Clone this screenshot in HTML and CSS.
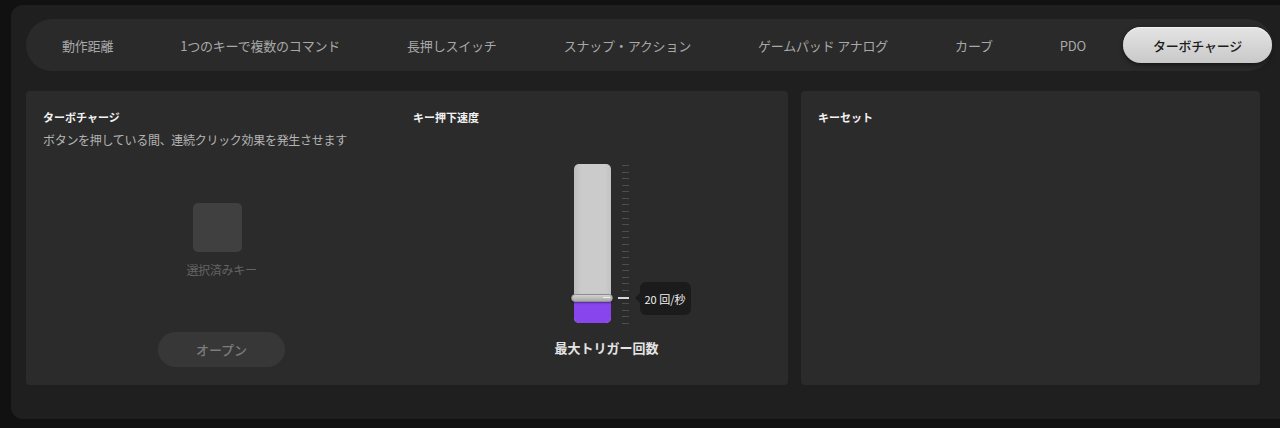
FILE: index.html
```html
<!DOCTYPE html>
<html lang="ja">
<head>
    <meta charset="UTF-8">
    <meta name="viewport" content="width=device-width, initial-scale=1.0">
    <title>ターボチャージ</title>
    <link rel="stylesheet" href="styles.css">
</head>
<body>
    <div class="frame">
        <nav class="tabs">
            <button class="tab">動作距離</button>
            <button class="tab">1つのキーで複数のコマンド</button>
            <button class="tab">長押しスイッチ</button>
            <button class="tab">スナップ・アクション</button>
            <button class="tab">ゲームパッド アナログ</button>
            <button class="tab">カーブ</button>
            <button class="tab">PDO</button>
            <button class="tab active">ターボチャージ</button>
        </nav>

        <div class="cards">
            <section class="card turbo">
                <div class="col">
                    <h4>ターボチャージ</h4>
                    <p class="desc">ボタンを押している間、連続クリック効果を発生させます</p>
                    <div class="key-area">
                        <div class="key-slot"></div>
                        <span class="key-label">選択済みキー</span>
                        <button class="open-btn">オープン</button>
                    </div>
                </div>
                <div class="col">
                    <h4>キー押下速度</h4>
                    <div class="speed">
                        <div class="track">
                            <div class="fill"></div>
                            <div class="handle"></div>
                            <div class="ticks" id="ticks"></div>
                            <div class="tick-now"></div>
                            <div class="tip">20 回/秒</div>
                        </div>
                        <div class="speed-label">最大トリガー回数</div>
                    </div>
                </div>
            </section>

            <section class="card">
                <h4>キーセット</h4>
            </section>
        </div>
    </div>

    <script>
        const ticks = document.getElementById('ticks');
        for (let i = 0; i < 25; i++) {
            ticks.appendChild(document.createElement('span'));
        }
    </script>
</body>
</html>
```

FILE: styles.css
```css
body {
    margin: 0;
    background-color: #111111;
    font-family: 'Noto Sans CJK JP', 'Noto Sans', sans-serif;
    overflow: hidden;
    height: 428px;
}

h4 {
    margin: 0;
    font-size: 11px;
    line-height: 16px;
    font-weight: 700;
    color: #f2f2f2;
}

button {
    font-family: inherit;
    border: none;
    cursor: pointer;
}

.frame {
    margin: 5px 0 0 11px;
    width: 1290px;
    height: 414px;
    box-sizing: border-box;
    padding: 14px 15px 0 15px;
    background-color: #1f1f1f;
    border-radius: 12px;
}

.tabs {
    width: 1247px;
    height: 52px;
    box-sizing: border-box;
    padding: 8px 4px 8px 6px;
    display: flex;
    gap: 7px;
    background-color: #2a2a2a;
    border-radius: 26px;
}

.tab {
    height: 36px;
    padding: 0 30px;
    background: none;
    color: #a8a8a8;
    font-size: 13px;
    letter-spacing: -0.2px;
    border-radius: 18px;
    white-space: nowrap;
}

.tab.active {
    background: linear-gradient(#e4e4e4, #c9c9c9);
    color: #1c1c1c;
    font-weight: 500;
    box-shadow: inset 0 1px 1px rgba(255, 255, 255, 0.6), 0 2px 5px rgba(0, 0, 0, 0.5);
}

.cards {
    margin-top: 20px;
    display: grid;
    grid-template-columns: 762px 459px;
    gap: 13px;
}

.card {
    height: 294px;
    box-sizing: border-box;
    padding: 18px 17px;
    background-color: #2b2b2b;
    border-radius: 4px;
}

.turbo {
    display: grid;
    grid-template-columns: 357px 358px;
    gap: 13px;
    padding-bottom: 0;
}

.desc {
    margin: 6px 0 0;
    font-size: 12px;
    line-height: 18px;
    letter-spacing: -0.3px;
    color: #b4b4b4;
}

.key-area {
    display: flex;
    flex-direction: column;
    align-items: center;
}

.key-slot {
    margin-top: 54px;
    margin-right: 8px;
    width: 49px;
    height: 49px;
    background-color: #404040;
    border-radius: 5px;
}

.key-label {
    margin-top: 9px;
    font-size: 12px;
    line-height: 18px;
    letter-spacing: -0.3px;
    color: #646464;
}

.open-btn {
    margin-top: 53px;
    width: 127px;
    height: 35px;
    background-color: #373737;
    color: #7c7c7c;
    font-size: 13px;
    font-weight: 500;
    border-radius: 18px;
}

.speed {
    display: flex;
    flex-direction: column;
    align-items: center;
}

.track {
    position: relative;
    margin-top: 39px;
    width: 37px;
    height: 159px;
    background: linear-gradient(90deg, #bdbdbd, #cbcbcb 20%, #cbcbcb 85%, #c2c2c2);
    border-radius: 5px;
}

.fill {
    position: absolute;
    left: 0;
    right: 0;
    bottom: 0;
    height: 24px;
    background-color: #8845ee;
    border-radius: 0 0 5px 5px;
}

.handle {
    position: absolute;
    left: -3px;
    top: 130px;
    width: 42px;
    height: 8px;
    box-sizing: border-box;
    background: linear-gradient(#d2d2d2, #a9a9a9);
    border: 1px solid #8e8e8e;
    border-radius: 4px;
    box-shadow: 0 1px 2px rgba(0, 0, 0, 0.4);
}

.handle::after {
    content: '';
    position: absolute;
    right: 2px;
    top: 2px;
    width: 7px;
    height: 1px;
    background-color: #f0f0f0;
}

.ticks {
    position: absolute;
    left: 48px;
    top: 1px;
    width: 7px;
    height: 159px;
    display: flex;
    flex-direction: column;
    justify-content: space-between;
}

.ticks span {
    height: 1px;
    background-color: #4d4d4d;
}

.tick-now {
    position: absolute;
    left: 44px;
    top: 133px;
    width: 11px;
    height: 2px;
    background-color: #d8d8d8;
}

.tip {
    position: absolute;
    left: 66px;
    top: 118px;
    width: 51px;
    height: 33px;
    display: flex;
    align-items: center;
    justify-content: center;
    background-color: #1b1b1b;
    border-radius: 6px;
    color: #f2f2f2;
    font-size: 11px;
    white-space: nowrap;
}

.tip::before {
    content: '';
    position: absolute;
    left: -5px;
    top: 11px;
    border-style: solid;
    border-width: 5px 5px 5px 0;
    border-color: transparent #1b1b1b transparent transparent;
}

.speed-label {
    margin-top: 16px;
    padding-left: 29px;
    font-size: 13px;
    line-height: 18px;
    font-weight: 700;
    color: #e4e4e4;
}
```
